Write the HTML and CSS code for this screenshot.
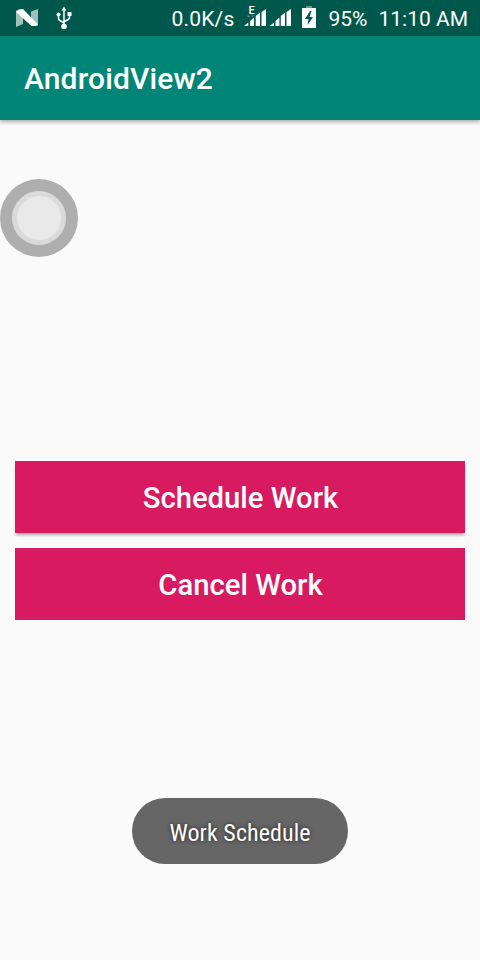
FILE: index.html
```html
<!DOCTYPE html>
<html lang="en">
<head>
<meta charset="utf-8">
<title>AndroidView2</title>
<link rel="stylesheet" href="styles.css">
</head>
<body>
<div class="screen">
  <header class="status">
    <svg class="nougat" width="22" height="18" viewBox="0 0 22 18"><path fill="#9fc1ba" d="M0 1l7 5v9l-7 3zM15 2.500L22 0v17l-7-5z"/><path fill="#fff" d="M0 3l2.500-2.500L7 0l15 15.500-2 1.500h-4.500z"/></svg>
    <svg class="usb" width="16" height="24" viewBox="0 0 16 24"><g fill="none" stroke="#fff" stroke-width="1.500"><path d="M8 4v17M2.500 9v3.500q0 1.500 1.500 2l4 2.500M13.500 8v3.500q0 1.500-1.500 2l-4 2.500"/></g><g fill="#fff"><path d="M8 .5l2.500 4h-5zM11.500 6h4v4h-4z"/><circle cx="2.500" cy="8.500" r="2"/><circle cx="8" cy="20.500" r="2.800"/></g></svg>
    <span class="speed">0.0K/s</span>
    <div class="signal">
      <svg width="48" height="17" viewBox="0 0 48 17" fill="#fff"><path d="M0 17l4.300-3.500V17zM6 17v-5l4-3.500V17zM11.700 17V7L16 3.500V17zM17.500 17V3L22 0v17zM25.700 17l4.300-3.500V17zM31.500 17v-5l3.900-3.500V17zM36.800 17V7L41 3.500V17zM42.500 17V3L47 0v17z"/><path fill="#78a49b" d="M3.500 6.500h2V8h-2zM7 6.500h3L8.500 8z"/></svg>
      <span class="net">E</span>
    </div>
    <svg class="battery" width="14" height="22" viewBox="0 0 14 22"><path fill="#649a90" d="M4 0h6v2H4z"/><path fill="#fff" d="M0 2h14v20H0z"/><path fill="#00574b" d="M8 5L3 13h3.500L5.500 19l5.500-8H7.500L9.500 5z"/></svg>
    <span class="percent">95%</span>
    <span class="clock">11:10 AM</span>
  </header>
  <div class="appbar"><h1>AndroidView2</h1></div>
  <main class="content">
    <button class="btn">Schedule Work</button>
    <button class="btn flat">Cancel Work</button>
  </main>
  <div class="assist"><div class="assist-core"></div></div>
  <div class="toast"><span>Work Schedule</span></div>
</div>
</body>
</html>
```
FILE: styles.css
```css
* { box-sizing: border-box; }
body { margin: 0; background: #fafafa; font-family: Roboto, sans-serif; }
.screen { position: relative; display: flex; flex-direction: column; width: 480px; height: 960px; overflow: hidden; }
.status { display: flex; align-items: flex-start; height: 36px; padding: 0 12px 0 16px; background: #00574b; color: #fff; font-size: 21px; line-height: 39px; white-space: nowrap; }
.status svg { display: block; flex: none; }
.nougat { margin-top: 9px; }
.usb { margin: 6px 0 0 18px; }
.speed { margin-left: auto; letter-spacing: 0.2px; }
.signal { position: relative; margin: 9px 0 0 10px; width: 48px; height: 18px; }
.net { position: absolute; left: 4px; top: -3px; font-size: 11px; font-weight: 500; line-height: 10px; }
.battery { margin: 6px 0 0 10px; }
.percent { margin-left: 12px; }
.clock { margin-left: 11px; }
.appbar { position: relative; display: flex; align-items: center; height: 84px; padding: 2px 0 0 24px; background: #008577; box-shadow: 0 2px 4px rgba(0, 0, 0, 0.32); }
h1 { margin: 0; color: #fff; font-size: 30px; font-weight: 500; line-height: 36px; letter-spacing: 0.13px; }
.content { flex: 1; display: flex; flex-direction: column; justify-content: center; gap: 15px; padding: 0 15px; }
.btn { height: 72px; padding: 2px 0 0 1px; border: 0; background: #d81b60; color: #fff; font-family: inherit; font-size: 29.25px; font-weight: 500; line-height: 36px; box-shadow: 0 3px 3px -1px rgba(0, 0, 0, 0.35); }
.flat { box-shadow: none; }
.assist { position: absolute; left: 0; top: 179px; width: 78px; height: 78px; padding: 12px; border-radius: 50%; background: #aeaeae; }
.assist-core { width: 54px; height: 54px; border: 5px solid #dadada; border-radius: 50%; background: #e9e9e9; }
.toast { position: absolute; left: 132px; top: 798px; display: flex; align-items: center; justify-content: center; width: 216px; height: 66px; padding-top: 4px; border-radius: 33px; background: #666; color: #fff; font-family: "Roboto Condensed", Roboto, sans-serif; font-size: 24px; font-stretch: 75%; letter-spacing: 0.07px; white-space: nowrap; text-shadow: 0 0 4px rgba(0, 0, 0, 0.7); }
```
